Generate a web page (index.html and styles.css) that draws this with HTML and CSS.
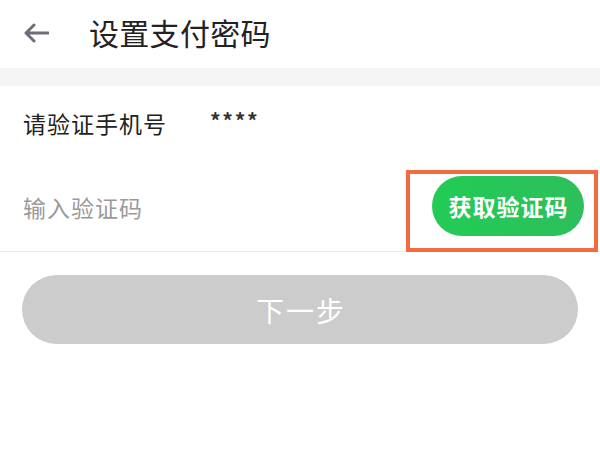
FILE: index.html
```html
<!DOCTYPE html>
<html lang="zh">
<head>
<meta charset="utf-8">
<link rel="stylesheet" href="styles.css">
</head>
<body>
<div class="page">
  <header class="topbar">
    <svg class="back" width="26" height="20" viewBox="0 0 26 20">
      <path d="M11 2 L3 10 L11 18 M3 10 H25" fill="none" stroke="#6e6d78" stroke-width="3" stroke-linecap="round" stroke-linejoin="round"/>
    </svg>
    <h1 class="title">设置支付密码</h1>
  </header>
  <div class="band"></div>
  <div class="row phone">
    <span class="label">请验证手机号</span>
    <span class="mask">****</span>
  </div>
  <div class="row code">
    <span class="placeholder">输入验证码</span>
    <div class="highlight">
      <button class="getcode">获取验证码</button>
    </div>
  </div>
  <div class="actions">
    <button class="next">下一步</button>
  </div>
</div>
</body>
</html>
```
FILE: styles.css
```css
* { box-sizing: border-box; }
html, body { margin: 0; padding: 0; background: #fff; }
body { font-family: "Noto Sans CJK SC", "Noto Sans", sans-serif; }
.page { width: 600px; height: 450px; }
.topbar { height: 68px; display: flex; align-items: center; padding-left: 23px; }
.back { display: block; margin-top: -3px; }
.title { margin: -5px 0 0 40px; font-size: 30px; font-weight: 400; color: #222; line-height: 1; letter-spacing: 0.3px; }
.band { height: 18px; background: #f5f5f5; }
.row { display: flex; align-items: center; padding-left: 23px; }
.phone { height: 76px; padding-bottom: 3px; }
.label { font-size: 23px; color: #222; letter-spacing: 1px; }
.mask { margin-left: 43px; font-size: 21px; color: #333; letter-spacing: 1.7px; margin-top: -6px; font-weight: 700; }
.code { height: 90px; justify-content: space-between; padding-right: 2px; border-bottom: 1px solid #ececec; }
.placeholder { font-size: 23px; color: #9a9a9a; letter-spacing: 1px; }
.highlight { align-self: flex-start; margin-top: 8px; border: 4px solid #f26c3f; padding: 2px 10px 12px 22px; }
.getcode { display: block; width: 152px; height: 60px; border: none; border-radius: 30px; background: linear-gradient(90deg, #22cc55 0%, #2dbf5c 100%); color: #fff; font-family: inherit; font-size: 23px; font-weight: 700; letter-spacing: 1px; padding: 0 0 0 1px; }
.actions { padding: 23px 22px 0 22px; }
.next { display: block; width: 100%; height: 69px; border: none; border-radius: 35px; background: #cccccc; color: #fff; font-family: inherit; font-size: 28px; letter-spacing: 2px; padding: 0 0 0 2px; }
```
